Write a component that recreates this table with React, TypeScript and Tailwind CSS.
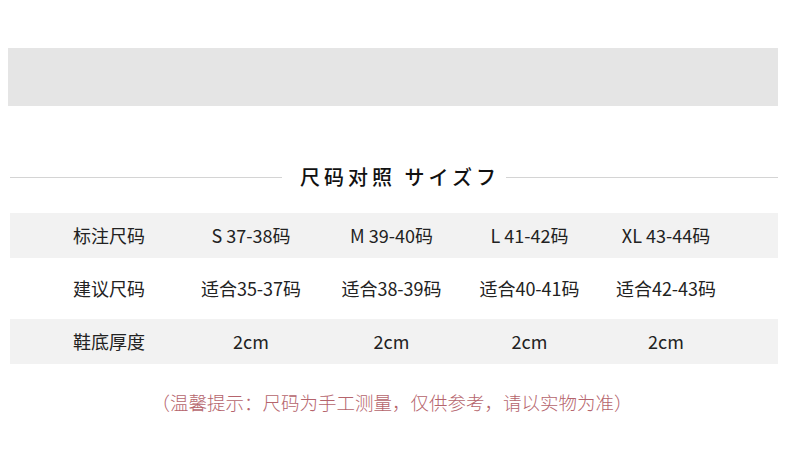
import React from "react";

const rows: { label: string; cells: string[]; bg: boolean }[] = [
  { label: "标注尺码", cells: ["S 37-38码", "M 39-40码", "L 41-42码", "XL 43-44码"], bg: true },
  { label: "建议尺码", cells: ["适合35-37码", "适合38-39码", "适合40-41码", "适合42-43码"], bg: false },
  { label: "鞋底厚度", cells: ["2cm", "2cm", "2cm", "2cm"], bg: true },
];

export default function App() {
  return (
    <div className="w-[790px] h-[452px] bg-white overflow-hidden font-['Noto_Sans_CJK_SC',sans-serif]">
      <div className="pt-[48px] px-[8px] pr-[12px]">
        <div className="h-[58px] bg-[#e5e5e5]" />
      </div>
      <div className="mt-[59px] flex items-center px-[10px] pr-[12px]">
        <div className="flex-1 h-px bg-[#d4d4d4]" />
        <div className="pl-[18px] pr-[6px] text-[20px] leading-[24px] font-medium tracking-[4px] text-[#111] whitespace-pre">
          尺码对照 サイズフ
        </div>
        <div className="flex-1 h-px bg-[#d4d4d4]" />
      </div>
      <div className="mt-[24px] flex flex-col gap-[8px] pl-[10px] pr-[12px]">
        {rows.map((r) => (
          <div
            key={r.label}
            className={`h-[45px] grid grid-cols-[170px_142px_139px_137px_136px] items-center text-[18px] text-[#222] ${r.bg ? "bg-[#f2f2f2]" : "bg-white"}`}
          >
            <div className="pl-[28px] text-center">{r.label}</div>
            {r.cells.map((c, i) => (
              <div key={i} className="text-center whitespace-nowrap">
                {c}
              </div>
            ))}
          </div>
        ))}
      </div>
      <div className="mt-[26px] text-center text-[18.5px] font-light text-[#b5646c] leading-[24px] pr-[6px]">
        （温馨提示：尺码为手工测量，仅供参考，请以实物为准）
      </div>
    </div>
  );
}
